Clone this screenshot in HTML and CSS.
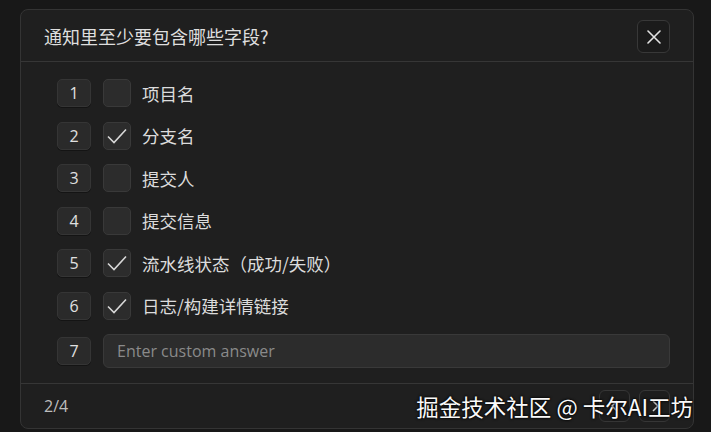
FILE: index.html
```html
<!DOCTYPE html>
<html lang="zh-CN">
<head>
  <meta charset="UTF-8">
  <meta name="viewport" content="width=device-width, initial-scale=1.0">
  <title>通知字段</title>
  <link rel="stylesheet" href="styles.css">
</head>
<body>
  <div class="dialog">
    <div class="dialog-header">
      <h2 class="dialog-title">通知里至少要包含哪些字段?</h2>
      <button class="close-btn" aria-label="关闭">
        <svg width="14" height="14" viewBox="0 0 14 14"><path d="M1 1 L13 13 M13 1 L1 13" stroke="#e2e2e2" stroke-width="1.6" stroke-linecap="round"/></svg>
      </button>
    </div>

    <div class="options">
      <div class="option">
        <span class="num">1</span>
        <span class="check"></span>
        <span class="label">项目名</span>
      </div>
      <div class="option">
        <span class="num">2</span>
        <span class="check on"><svg viewBox="0 0 28 28"><path d="M5 14.5 L11 20.5 L23 7.5"/></svg></span>
        <span class="label">分支名</span>
      </div>
      <div class="option">
        <span class="num">3</span>
        <span class="check"></span>
        <span class="label">提交人</span>
      </div>
      <div class="option">
        <span class="num">4</span>
        <span class="check"></span>
        <span class="label">提交信息</span>
      </div>
      <div class="option">
        <span class="num">5</span>
        <span class="check on"><svg viewBox="0 0 28 28"><path d="M5 14.5 L11 20.5 L23 7.5"/></svg></span>
        <span class="label">流水线状态（成功/失败）</span>
      </div>
      <div class="option">
        <span class="num">6</span>
        <span class="check on"><svg viewBox="0 0 28 28"><path d="M5 14.5 L11 20.5 L23 7.5"/></svg></span>
        <span class="label">日志/构建详情链接</span>
      </div>
      <div class="option custom">
        <span class="num">7</span>
        <input type="text" class="custom-input" placeholder="Enter custom answer">
      </div>
    </div>

    <div class="dialog-footer">
      <span class="page">2/4</span>
      <div class="nav">
        <button class="nav-btn"><svg width="10" height="12" viewBox="0 0 10 12"><path d="M7 1 L2 6 L7 11" fill="none" stroke="#cfcfcf" stroke-width="1.5"/></svg></button>
        <button class="nav-btn"><svg width="10" height="12" viewBox="0 0 10 12"><path d="M3 1 L8 6 L3 11" fill="none" stroke="#cfcfcf" stroke-width="1.5"/></svg></button>
      </div>
    </div>
  </div>

  <div class="watermark">掘金技术社区 @ 卡尔AI工坊</div>
</body>
</html>
```

FILE: styles.css
```css
* {
  box-sizing: border-box;
}
body {
  margin: 0;
  padding: 9px 0 0 20px;
  background: #181818;
  font-family: "Microsoft YaHei", "Noto Sans CJK SC", "Noto Sans", sans-serif;
  color: #d6d6d6;
  height: 432px;
  overflow: hidden;
  position: relative;
}
.dialog {
  width: 674px;
  height: 420px;
  background: #1f1f1f;
  border: 1px solid #343434;
  border-radius: 8px;
  display: flex;
  flex-direction: column;
}
.dialog-header {
  height: 52px;
  padding: 0 23px 0 23px;
  display: flex;
  align-items: center;
  justify-content: space-between;
  border-bottom: 1px solid #363636;
}
.dialog-title {
  margin: 0;
  font-size: 18px;
  font-weight: 400;
  color: #dedede;
}
.close-btn {
  width: 33px;
  height: 33px;
  margin-top: 2px;
  background: #1b1b1b;
  border: 1px solid #383838;
  border-radius: 6px;
  display: flex;
  align-items: center;
  justify-content: center;
  padding: 0;
}
.options {
  padding: 17px 23px 0 36px;
  display: flex;
  flex-direction: column;
  gap: 14.6px;
  flex: 1;
}
.option {
  display: flex;
  align-items: center;
  height: 28px;
}
.option.custom {
  height: 34px;
  margin-top: -1px;
}
.num {
  width: 34px;
  height: 28px;
  flex: none;
  background: #2a2a2a;
  border: 1px solid #353535;
  border-radius: 5px;
  box-shadow: 0 1px 0 #141414;
  display: flex;
  align-items: center;
  justify-content: center;
  font-family: "Open Sans", "Noto Sans", sans-serif;
  font-size: 16px;
  color: #e0e0e0;
}
.check {
  width: 28px;
  height: 28px;
  flex: none;
  margin-left: 12px;
  background: #2c2c2c;
  border: 1px solid #393939;
  border-radius: 5px;
  position: relative;
}
.check svg {
  position: absolute;
  left: -1px;
  top: -1px;
  width: 28px;
  height: 28px;
  fill: none;
  stroke: #d8d8d8;
  stroke-width: 1.6;
}
.label {
  margin-left: 11px;
  font-size: 17.5px;
  color: #dcdcdc;
}
.custom-input {
  flex: 1;
  height: 34px;
  margin-left: 12px;
  background: #2c2c2c;
  border: 1px solid #393939;
  border-radius: 6px;
  padding: 0 13px;
  font-family: "Open Sans", "Noto Sans", sans-serif;
  font-size: 16px;
  color: #d8d8d8;
  outline: none;
}
.custom-input::placeholder {
  color: #8a8a8a;
}
.dialog-footer {
  height: 45px;
  border-top: 1px solid #363636;
  padding: 0 23px 0 23px;
  display: flex;
  align-items: center;
  justify-content: space-between;
}
.page {
  font-family: "Open Sans", "Noto Sans", sans-serif;
  font-size: 16px;
  color: #bdbdbd;
}
.nav {
  display: flex;
  gap: 9px;
}
.nav-btn {
  width: 31px;
  height: 32px;
  background: #1d1d1d;
  border: 1px solid #363636;
  border-radius: 6px;
  display: flex;
  align-items: center;
  justify-content: center;
  padding: 0;
}
.watermark {
  position: absolute;
  right: 18px;
  bottom: 10px;
  font-size: 22.5px;
  color: #fafafa;
  text-shadow: 0 0 2px #000, 0 0 3px #000;
  white-space: nowrap;
}
```
